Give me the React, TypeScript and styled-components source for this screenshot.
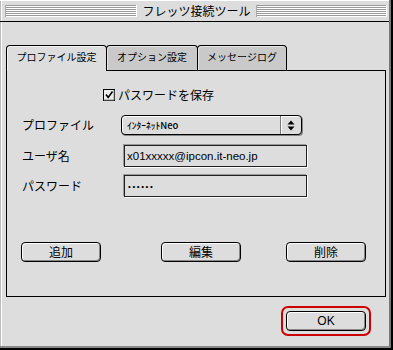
import React from "react";
import styled, { createGlobalStyle } from "styled-components";

const Global = createGlobalStyle`
  html, body { margin: 0; padding: 0; background: #dddddd; }
  body {
    width: 393px; height: 350px; overflow: hidden;
    font-family: "Noto Sans CJK JP", "Noto Sans", sans-serif;
    color: #000;
  }
`;

const Window = styled.div`
  width: 393px;
  height: 350px;
  box-sizing: border-box;
  border-right: 2px solid #000;
  border-bottom: 2px solid #000;
  background: #dddddd;
  display: flex;
`;

const Frame = styled.div`
  flex: 1;
  display: flex;
  flex-direction: column;
  border-right: 2px solid #777;
  border-bottom: 2px solid #888;
  box-shadow: inset 1px 0 0 #bbb, inset 2px 0 0 #fff;
`;

const TitleBar = styled.div`
  height: 21px;
  border-bottom: 1px solid #000;
  display: flex;
  align-items: center;
  padding: 0 2px 0 5px;
  box-shadow: inset 0 1px 0 #fff;
`;

const Stripes = styled.div`
  flex: 1;
  height: 12px;
  box-sizing: border-box;
  border-left: 1px solid #aaa;
  border-right: 1px solid #fff;
  background: repeating-linear-gradient(
    to bottom,
    #999 0px, #999 1px, #fff 1px, #fff 2px
  );
`;

const TitleText = styled.div`
  font-size: 12px;
  line-height: 14px;
  padding: 0 5px 0 6px;
  white-space: nowrap;
`;

const Body = styled.div`
  flex: 1;
  display: flex;
  flex-direction: column;
  padding: 23px 3px 0 6px;
`;

const TabRow = styled.div`
  display: flex;
  align-items: flex-start;
  height: 25px;
`;

const Tab = styled.div<{ $active?: boolean; $w: number }>`
  width: ${(p) => p.$w}px;
  height: ${(p) => (p.$active ? 26 : 25)}px;
  box-sizing: border-box;
  border: 1px solid #000;
  border-bottom: none;
  border-radius: 4px 4px 0 0;
  background: ${(p) => (p.$active ? "#dddddd" : "#c9c9c9")};
  box-shadow: ${(p) =>
    p.$active ? "inset 1px 1px 0 #f4f4f4" : "inset 1px 1px 0 #e6e6e6"};
  display: flex;
  justify-content: center;
  padding-top: 5px;
  font-size: 10px;
  line-height: 12px;
  white-space: nowrap;
  position: relative;
  z-index: ${(p) => (p.$active ? 2 : 1)};
  & + & { margin-left: -1px; }
`;

const Panel = styled.div`
  height: 227px;
  box-sizing: border-box;
  border: 1px solid #000;
  display: flex;
  flex-direction: column;
  padding-top: 18px;
`;

const CheckRow = styled.label`
  display: flex;
  align-items: center;
  padding-left: 96px;
  height: 12px;
  font-size: 12px;
  line-height: 12px;
  gap: 3px;
`;

const FormRow = styled.div<{ $top: number }>`
  display: flex;
  align-items: center;
  padding-left: 15px;
  margin-top: ${(p) => p.$top}px;
`;

const Label = styled.div`
  width: 99px;
  font-size: 12px;
  line-height: 14px;
`;

const Popup = styled.div`
  width: 181px;
  height: 20px;
  box-sizing: border-box;
  border: 1px solid #000;
  border-radius: 4px;
  background: #dddddd;
  box-shadow: inset 1px 1px 0 #fff, 1px 1px 0 #888;
  display: flex;
  align-items: stretch;
`;

const PopupValue = styled.div`
  flex: 1;
  padding-left: 5px;
  font-size: 9.5px;
  font-weight: 500;
  display: flex;
  align-items: center;
  white-space: nowrap;
`;

const PopupArrow = styled.div`
  width: 20px;
  border-left: 1px solid #777;
  box-shadow: inset 1px 0 0 #fff;
  display: flex;
  align-items: center;
  justify-content: center;
`;

const Field = styled.div`
  margin-left: 3px;
  width: 183px;
  height: 22px;
  box-sizing: border-box;
  border: 1px solid #222;
  box-shadow: 1px 1px 0 #fff, -1px -1px 0 #999;
  display: flex;
  align-items: center;
  padding-left: 2px;
  font-family: "Liberation Sans", sans-serif;
  font-size: 11.5px;
`;

const Dots = styled.span`
  font-size: 8px;
  letter-spacing: 1.6px;
  padding-left: 1px;
`;

const ButtonRow = styled.div`
  display: flex;
  padding-left: 14px;
  margin-top: 45px;
`;

const Button = styled.button<{ $gap?: number }>`
  width: 80px;
  height: 20px;
  margin: 0 0 0 ${(p) => p.$gap ?? 0}px;
  padding: 0;
  box-sizing: border-box;
  border: 1px solid #000;
  border-radius: 4px;
  background: #dddddd;
  box-shadow: inset 1px 1px 0 #fff, inset -1px -1px 0 #888;
  font-family: "Noto Sans CJK JP", sans-serif;
  font-size: 12px;
  line-height: 16px;
  color: #000;
  display: flex;
  align-items: center;
  justify-content: center;
`;

const Footer = styled.div`
  display: flex;
  justify-content: flex-end;
  margin-top: 9px;
  padding-right: 15px;
`;

const DefaultRing = styled.div`
  border: 2px solid #cc0000;
  border-radius: 7px;
  padding: 3px;
  display: flex;
`;

const OkButton = styled(Button)`
  font-family: "Liberation Sans", sans-serif;
  font-size: 12px;
`;

const CheckBox = () => (
  <svg width="12" height="12" viewBox="0 0 12 12">
    <rect x="0.5" y="0.5" width="11" height="11" fill="#eeeeee" stroke="#000" />
    <path d="M1 11 L11 11 L11 1" fill="none" stroke="#888" strokeWidth="1" />
    <path d="M3 5.5 L5.2 8.5 L9.5 2.5" fill="none" stroke="#000" strokeWidth="1.6" />
  </svg>
);

const UpDown = () => (
  <svg width="8" height="11" viewBox="0 0 8 11">
    <path d="M4 0.5 L7.5 4.5 L0.5 4.5 Z" fill="#000" />
    <path d="M0.5 6.5 L7.5 6.5 L4 10.5 Z" fill="#000" />
  </svg>
);

export default function App() {
  return (
    <>
      <Global />
      <Window>
        <Frame>
          <TitleBar>
            <Stripes />
            <TitleText>フレッツ接続ツール</TitleText>
            <Stripes />
          </TitleBar>
          <Body>
            <TabRow>
              <Tab $active $w={101}>プロファイル設定</Tab>
              <Tab $w={92}>オプション設定</Tab>
              <Tab $w={90}>メッセージログ</Tab>
            </TabRow>
            <Panel>
              <CheckRow>
                <CheckBox />
                <span>パスワードを保存</span>
              </CheckRow>
              <FormRow $top={14}>
                <Label>プロファイル</Label>
                <Popup>
                  <PopupValue>ｲﾝﾀｰﾈｯﾄNeo</PopupValue>
                  <PopupArrow>
                    <UpDown />
                  </PopupArrow>
                </Popup>
              </FormRow>
              <FormRow $top={10}>
                <Label>ユーザ名</Label>
                <Field>x01xxxxx@ipcon.it-neo.jp</Field>
              </FormRow>
              <FormRow $top={8}>
                <Label>パスワード</Label>
                <Field>
                  <Dots>••••••</Dots>
                </Field>
              </FormRow>
              <ButtonRow>
                <Button>追加</Button>
                <Button $gap={60}>編集</Button>
                <Button $gap={45}>削除</Button>
              </ButtonRow>
            </Panel>
            <Footer>
              <DefaultRing>
                <OkButton>OK</OkButton>
              </DefaultRing>
            </Footer>
          </Body>
        </Frame>
      </Window>
    </>
  );
}
